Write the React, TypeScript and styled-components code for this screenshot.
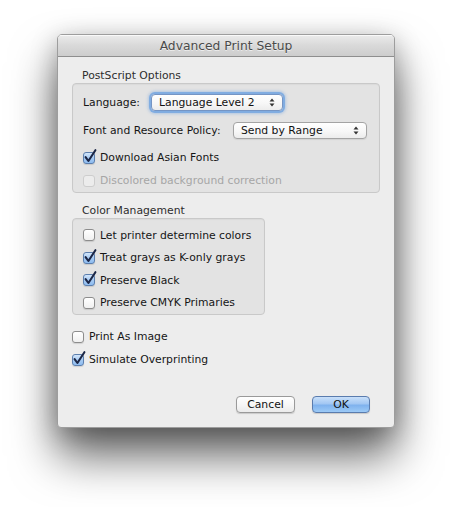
import styled, { createGlobalStyle } from "styled-components";

const GlobalStyle = createGlobalStyle`
  html, body {
    margin: 0;
    background: #ffffff;
  }
  body {
    font-family: "DejaVu Sans", "Liberation Sans", sans-serif;
    -webkit-font-smoothing: antialiased;
  }
`;

const Stage = styled.div`
  width: 452px;
  height: 507px;
  box-sizing: border-box;
  padding: 34px 0 0 57px;
  overflow: hidden;
`;

const Window = styled.div`
  width: 338px;
  height: 394px;
  box-sizing: border-box;
  background: #ededed;
  border: 1px solid #9d9d9d;
  border-radius: 5px 5px 4px 4px;
  box-shadow: 0 28px 46px rgba(0, 0, 0, 0.6), 0 6px 26px rgba(0, 0, 0, 0.25);
  display: flex;
  flex-direction: column;
  overflow: hidden;
`;

const TitleBar = styled.div`
  height: 22px;
  box-sizing: border-box;
  border-bottom: 1px solid #8e8e8e;
  background: linear-gradient(#ebebeb, #d9d9d9 50%, #cdcdcd);
  box-shadow: inset 0 1px 0 rgba(255, 255, 255, 0.7);
  display: flex;
  align-items: center;
  justify-content: center;
  font-size: 12.3px;
  color: #4a4a4a;
  text-shadow: 0 1px 0 rgba(255, 255, 255, 0.6);
`;

const Content = styled.div`
  flex: 1;
  display: flex;
  flex-direction: column;
  padding: 12px 14px 0;
  font-size: 10.8px;
  color: #151515;
`;

const GroupLabel = styled.div<{ $gap?: number }>`
  height: 14px;
  line-height: 14px;
  padding-left: 10px;
  margin-top: ${(p) => p.$gap ?? 0}px;
  color: #2e2e2e;
`;

const GroupBox = styled.div<{ $width: number; $height: number; $padTop: number }>`
  width: ${(p) => p.$width}px;
  height: ${(p) => p.$height}px;
  box-sizing: border-box;
  padding: ${(p) => p.$padTop}px 10px 0;
  background: #e3e3e3;
  border: 1px solid #c9c9c9;
  border-radius: 4px;
  box-shadow: inset 0 1px 1px rgba(0, 0, 0, 0.04);
  display: flex;
  flex-direction: column;
`;

const Row = styled.div<{ $gap?: number }>`
  height: 23px;
  margin-top: ${(p) => p.$gap ?? 0}px;
  display: flex;
  align-items: center;
`;

const FieldLabel = styled.span<{ $width: number }>`
  width: ${(p) => p.$width}px;
  flex: none;
`;

const Popup = styled.div<{ $width: number; $focused?: boolean }>`
  width: ${(p) => p.$width}px;
  height: 17px;
  box-sizing: border-box;
  border: 1px solid ${(p) => (p.$focused ? "#7595c4" : "#a4a4a4")};
  border-radius: 4px;
  background: linear-gradient(#ffffff, #f7f7f7 55%, #ececec);
  box-shadow: ${(p) =>
    p.$focused
      ? "0 0 0 2px rgba(115, 165, 225, 0.8), 0 0 3px 3px rgba(115, 165, 225, 0.45)"
      : "0 1px 1px rgba(0, 0, 0, 0.08)"};
  display: flex;
  align-items: center;
  justify-content: space-between;
  padding: 0 7px 0 7px;
  color: #111;
`;

const Arrows = () => (
  <svg width="6" height="9" viewBox="0 0 6 9">
    <path d="M3 0.5 L5.5 3.5 L0.5 3.5 Z" fill="#333" />
    <path d="M3 8.5 L5.5 5.5 L0.5 5.5 Z" fill="#333" />
  </svg>
);

const CheckRow = styled.label<{ $disabled?: boolean }>`
  height: 23px;
  display: flex;
  align-items: center;
  gap: 5px;
  color: ${(p) => (p.$disabled ? "#a6a6a6" : "#151515")};
`;

const Box = styled.span<{ $checked?: boolean; $disabled?: boolean }>`
  position: relative;
  width: 12px;
  height: 12px;
  box-sizing: border-box;
  flex: none;
  border-radius: 3px;
  border: 1px solid
    ${(p) => (p.$disabled ? "#cdcdcd" : p.$checked ? "#5c7fae" : "#8d8d8d")};
  background: ${(p) =>
    p.$disabled
      ? "#ececec"
      : p.$checked
      ? "linear-gradient(#d3e6fb, #a7cbf3 50%, #8ebcf0)"
      : "linear-gradient(#ffffff, #f0f0f0)"};
  box-shadow: ${(p) => (p.$disabled ? "none" : "0 1px 1px rgba(0, 0, 0, 0.12)")};
`;

const Tick = styled.svg`
  position: absolute;
  left: 0px;
  top: -4px;
  overflow: visible;
`;

type CheckProps = { label: string; checked?: boolean; disabled?: boolean };

const Check = ({ label, checked, disabled }: CheckProps) => (
  <CheckRow $disabled={disabled}>
    <Box $checked={checked} $disabled={disabled}>
      {checked && (
        <Tick width="12" height="14" viewBox="0 0 12 14">
          <path
            d="M1.6 8.2 L4.4 12 L11.4 1.2"
            fill="none"
            stroke="#1c2747"
            strokeWidth="2.1"
            strokeLinecap="round"
            strokeLinejoin="round"
          />
        </Tick>
      )}
    </Box>
    <span>{label}</span>
  </CheckRow>
);

const Loose = styled.div`
  margin-top: 10px;
  display: flex;
  flex-direction: column;
`;

const Buttons = styled.div`
  margin-top: auto;
  margin-bottom: 14px;
  padding-right: 10px;
  display: flex;
  justify-content: flex-end;
  gap: 17px;
`;

const Button = styled.button<{ $primary?: boolean }>`
  width: ${(p) => (p.$primary ? 58 : 59)}px;
  height: 17px;
  box-sizing: border-box;
  padding: 0;
  font: inherit;
  font-size: 10.8px;
  color: #111;
  border-radius: 4px;
  border: 1px solid ${(p) => (p.$primary ? "#5a7cae" : "#9a9a9a")};
  background: ${(p) =>
    p.$primary
      ? "linear-gradient(#c9e0fa, #a2c7f3 45%, #7fb2ee 55%, #9ccaf6)"
      : "linear-gradient(#ffffff, #f6f6f6 55%, #ebebeb)"};
  box-shadow: 0 1px 1px rgba(0, 0, 0, 0.15);
`;

export default function App() {
  return (
    <>
      <GlobalStyle />
      <Stage>
        <Window>
          <TitleBar>Advanced Print Setup</TitleBar>
          <Content>
            <GroupLabel>PostScript Options</GroupLabel>
            <GroupBox $width={308} $height={110} $padTop={7}>
              <Row>
                <FieldLabel $width={68}>Language:</FieldLabel>
                <Popup $width={132} $focused>
                  <span>Language Level 2</span>
                  <Arrows />
                </Popup>
              </Row>
              <Row $gap={5}>
                <FieldLabel $width={150}>Font and Resource Policy:</FieldLabel>
                <Popup $width={134}>
                  <span>Send by Range</span>
                  <Arrows />
                </Popup>
              </Row>
              <Row $gap={4}>
                <Check label="Download Asian Fonts" checked />
              </Row>
              <Row>
                <Check label="Discolored background correction" disabled />
              </Row>
            </GroupBox>

            <GroupLabel $gap={11}>Color Management</GroupLabel>
            <GroupBox $width={193} $height={97} $padTop={5}>
              <Check label="Let printer determine colors" />
              <Check label="Treat grays as K-only grays" checked />
              <Check label="Preserve Black" checked />
              <Check label="Preserve CMYK Primaries" />
            </GroupBox>

            <Loose>
              <Check label="Print As Image" />
              <Check label="Simulate Overprinting" checked />
            </Loose>

            <Buttons>
              <Button>Cancel</Button>
              <Button $primary>OK</Button>
            </Buttons>
          </Content>
        </Window>
      </Stage>
    </>
  );
}
